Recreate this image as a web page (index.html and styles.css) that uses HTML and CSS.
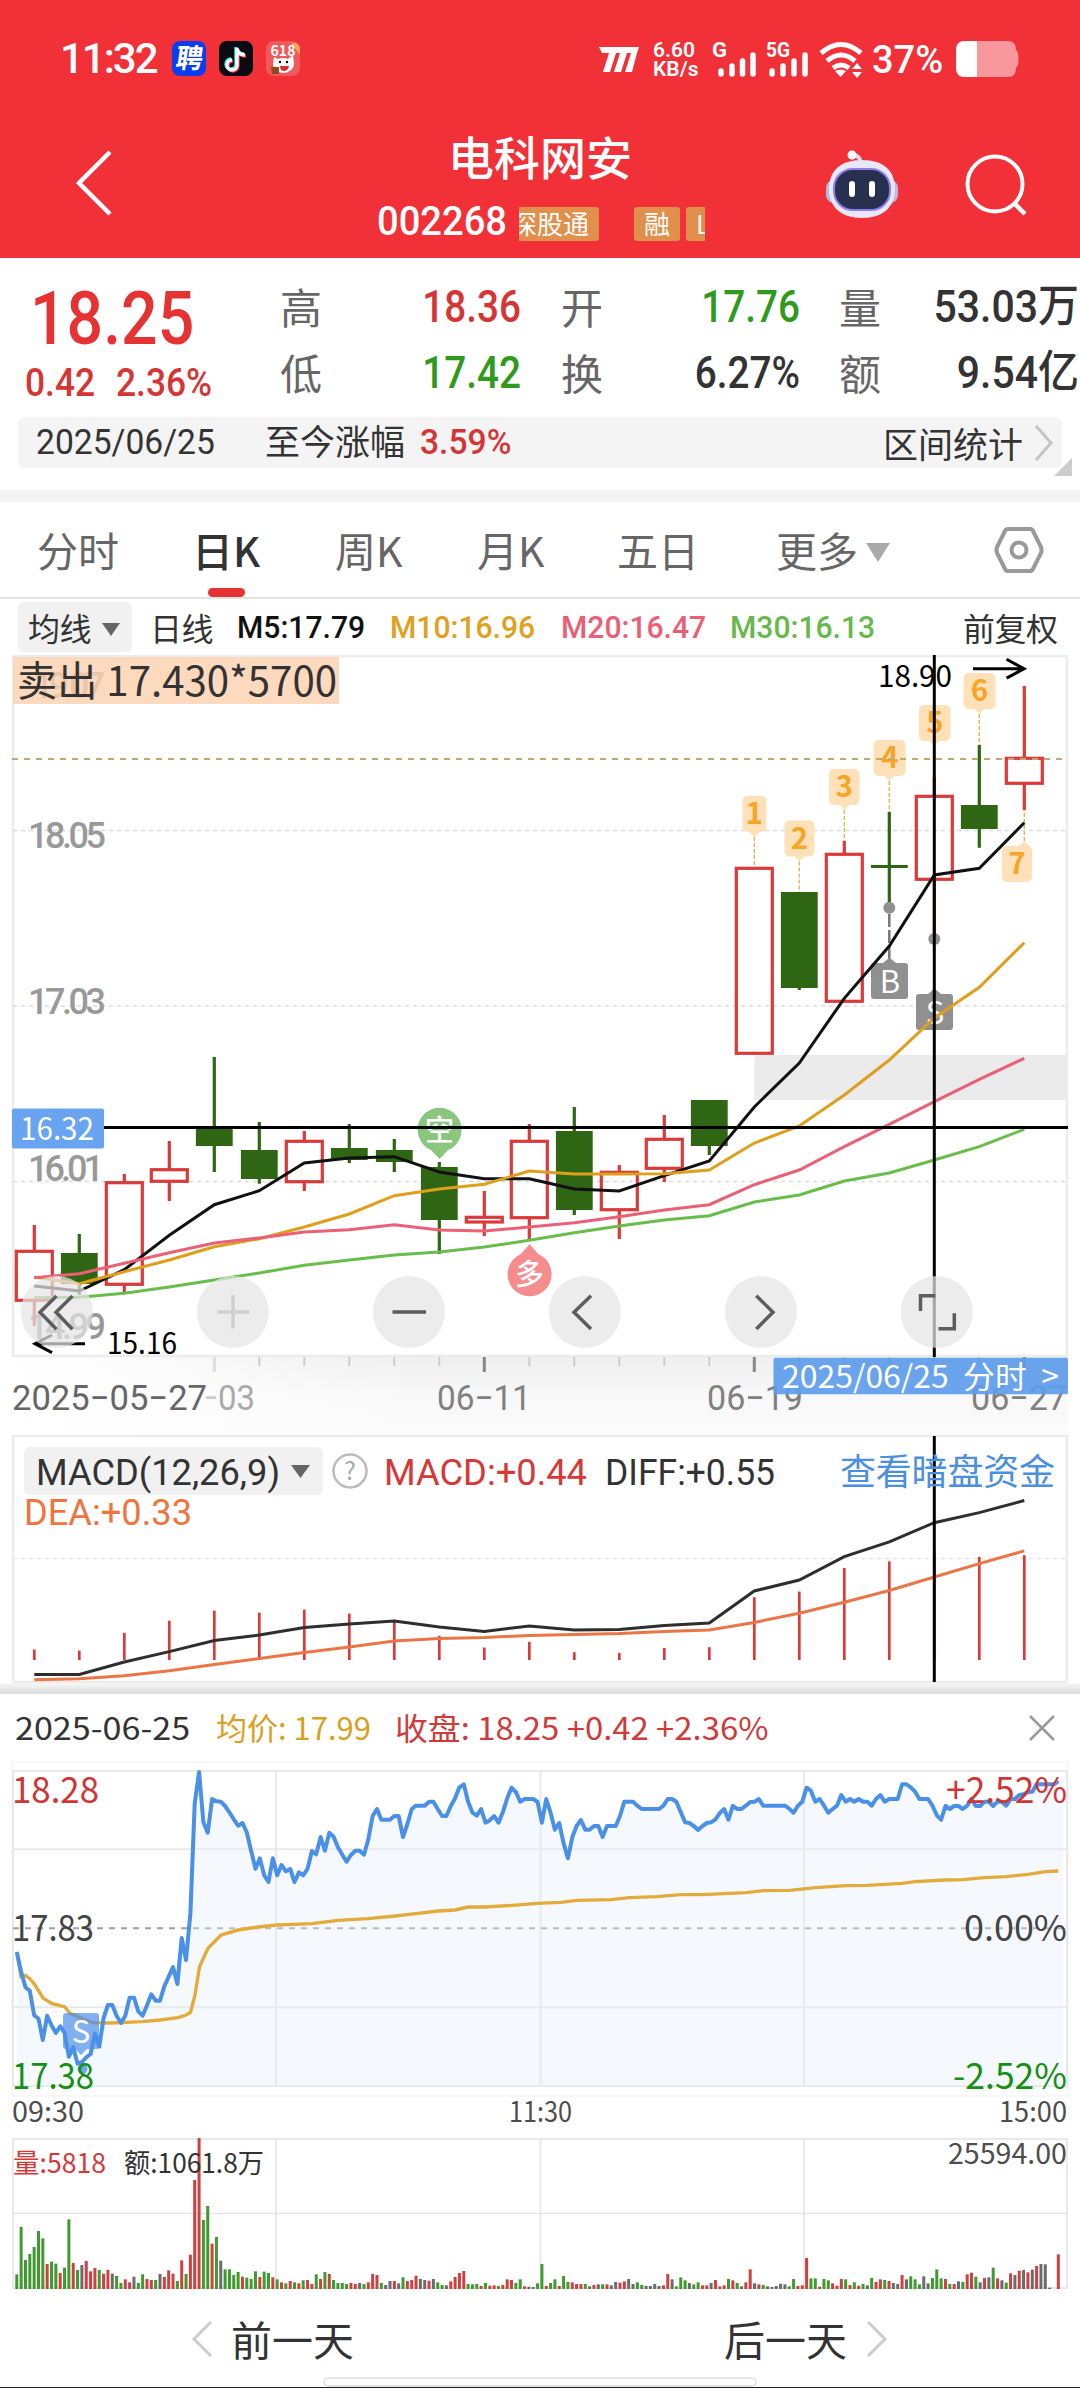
FILE: index.html
```html
<!DOCTYPE html>
<html lang="zh-CN">
<head>
  <meta charset="UTF-8"/>
  <meta name="viewport" content="width=device-width, initial-scale=1"/>
  <title>电科网安 002268</title>
  <link rel="stylesheet" href="styles.css">
</head>
<body>
  <header class="top">
    <div class="status">
      <span class="clock">11:32</span>
      <div class="apps">
        <svg width="34" height="35" viewBox="0 0 34 35"><rect width="34" height="35" rx="8" fill="#0a3cf0"/><text x="17" y="27" text-anchor="middle" font-size="27" font-weight="700" fill="#fff" transform="skewX(-8) translate(3 0)">聘</text></svg>
        <svg width="34" height="35" viewBox="0 0 34 35"><rect width="34" height="35" rx="8" fill="#0b0b14"/><g fill="none" stroke-width="3.4"><path stroke="#25f4ee" d="M17 6v17a5 5 0 1 1-5-5M17 7c1 4 4 6 8 6"/><path stroke="#fe2c55" d="M19 8v17a5 5 0 1 1-5-5M19 9c1 4 4 6 8 6"/><path stroke="#fff" d="M18 7v17a5 5 0 1 1-5-5M18 8c1 4 4 6 8 6"/></g></svg>
        <svg width="34" height="35" viewBox="0 0 34 35"><rect width="34" height="35" rx="8" fill="#f2595a"/><path d="M25 2h5q4 2 4 7v5z" fill="#f9a35b"/><path d="M8 16l4 2q5-2 10 0l5-4 1 9a10.500 9 0 0 1-21 0z" fill="#fff"/><text x="17" y="15" text-anchor="middle" font-size="14" font-weight="700" fill="#fff">618</text><circle cx="14" cy="21" r="1.200"/><circle cx="21" cy="21" r="1.200"/><path d="M14 25h9q-1 5-5 5t-4-5z" fill="#d9302f"/><path d="M5 26h8v7H6z" fill="#8a4a22"/></svg>
      </div>
      <svg class="mi" width="42" height="25" viewBox="0 0 42 25"><path fill="#fff" d="M2 0h40l-2 6-5 19h-7l6-19h-4l-6 19h-7l6-19h-4l-6 19H6L12 6H5z"/></svg>
      <div class="speed"><span>6.60</span><span>KB/s</span></div>
      <svg class="sig" width="42" height="36" viewBox="0 0 42 36"><text x="-1" y="16" font-size="20" font-weight="700" fill="#fff" textLength="15" lengthAdjust="spacingAndGlyphs">G</text><path d="M8 30v3M19 25v8M29.500 20v13M40 14v19" stroke="#fff" stroke-width="5.500" stroke-linecap="round"/></svg>
      <svg class="sig2" width="46" height="36" viewBox="0 0 46 36"><text x="0" y="16" font-size="20" font-weight="700" fill="#fff" textLength="24" lengthAdjust="spacingAndGlyphs">5G</text><path d="M6 30v3M17 25v8M28 20v13M39 14v19" stroke="#fff" stroke-width="5.500" stroke-linecap="round"/></svg>
      <svg class="wifi" width="44" height="37" viewBox="0 0 44 37"><g fill="none" stroke="#fff" stroke-width="5"><path d="M2 12q20-17 40 0"/><path d="M8 20q14-12 28 0"/><path d="M14 27q8-6 16 0"/></g><path d="M16 30q6-3 11 0l-5.500 6zM33 28l5-6 5 6zM33 31l5 6 5-6z" fill="#fff"/></svg>
      <span class="pct">37%</span>
      <svg class="batt" width="63" height="37" viewBox="0 0 63 37"><path d="M9 0h43q8 0 8 9l2 3q1 6 0 12l-2 3q0 9-8 9H9q-9 0-9-9V9q0-9 9-9z" fill="#fff" opacity=".5"/><path d="M21 0H9Q0 0 0 9v18q0 9 9 9h12z" fill="#fff"/></svg>
    </div>
    <div class="nav">
      <svg class="back" width="38" height="68" viewBox="0 0 38 68"><path d="M35 3L4 34l31 31" fill="none" stroke="#fff" stroke-width="4.500"/></svg>
      <div class="title">
        <h1>电科网安</h1>
        <div class="code">
          <span class="num">002268</span>
          <div class="tags"><i class="first">深股通</i><i class="rong">融</i><i>L</i></div>
        </div>
      </div>
      <svg class="robot" width="74" height="70" viewBox="0 0 74 70">
        <path d="M36 14q-1-8-9-8" fill="none" stroke="#dcd9f4" stroke-width="4"/><circle cx="27" cy="6" r="4.500" fill="#fff"/>
        <rect x="1" y="31" width="72" height="23" rx="8" fill="#b9b8e6"/>
        <path d="M37 11c22 0 33 11 33 29S58 69 37 69 4 58 4 40s11-29 33-29z" fill="#e9e8f8"/>
        <rect x="9" y="20" width="56" height="41" rx="19" fill="#27314f" stroke="#8d7df0" stroke-width="2"/>
        <path d="M27 35v10M47 35v10" stroke="#fff" stroke-width="6" stroke-linecap="round"/>
      </svg>
      <svg class="search" width="62" height="64" viewBox="0 0 62 64"><circle cx="30" cy="31" r="27.500" fill="none" stroke="#fff" stroke-width="4"/><path d="M49 50l11 11" stroke="#fff" stroke-width="4.500"/></svg>
    </div>
  </header>

  <section class="quote">
    <div class="last">
      <b class="num">18.25</b>
      <div><span class="num">0.42</span><span class="num">2.36%</span></div>
    </div>
    <dl>
      <dt>高</dt><dd class="up">18.36</dd>
      <dt>开</dt><dd class="down">17.76</dd>
      <dt>量</dt><dd class="wide">53.03万</dd>
      <dt>低</dt><dd class="down">17.42</dd>
      <dt>换</dt><dd>6.27%</dd>
      <dt>额</dt><dd class="wide">9.54亿</dd>
    </dl>
  </section>
  <div class="range">
    <span class="num">2025/06/25</span>
    <span>至今涨幅</span>
    <span class="num up">3.59%</span>
    <span class="stat">区间统计</span>
    <svg width="20" height="36" viewBox="0 0 20 36"><path d="M2 1l15 17L2 35" fill="none" stroke="#c4c4c4" stroke-width="3"/></svg>
    <div class="corner"></div>
  </div>
  <div class="band"></div>

  <nav class="tabs">
    <a>分时</a><a class="on">日K</a><a>周K</a><a>月K</a><a>五日</a><a class="more">更多</a>
    <svg width="50" height="50" viewBox="0 0 50 50"><path d="M14 4h22q2 0 3 2l8 16q1 3 0 6l-8 16q-1 2-3 2H14q-2 0-3-2L3 28q-1-3 0-6l8-16q1-2 3-2z" fill="none" stroke="#999" stroke-width="4"/><circle cx="25" cy="25" r="7.500" fill="none" stroke="#999" stroke-width="4"/></svg>
  </nav>
  <div class="ma">
    <span class="pick">均线</span>
    <span>日线</span>
    <span class="num k">M5:17.79</span>
    <span class="num m10">M10:16.96</span>
    <span class="num m20">M20:16.47</span>
    <span class="num m30">M30:16.13</span>
    <span>前复权</span>
  </div>

  <!-- daily candles -->
  <svg class="chart" width="1080" height="780" viewBox="0 655 1080 780">
    <defs>
      <linearGradient id="axisY" x1="0" y1="0" x2="0" y2="1"><stop offset="0" stop-color="#efefef"/><stop offset=".5" stop-color="#f8f8f8"/><stop offset="1" stop-color="#fbfbfb"/></linearGradient>
      <linearGradient id="axisX"><stop offset="0" stop-color="#fff"/><stop offset=".3" stop-color="#fff" stop-opacity=".8"/><stop offset="1" stop-color="#fff" stop-opacity="0"/></linearGradient>
    </defs>
    <rect x="0" y="1357" width="1068" height="78" fill="url(#axisY)"/>
    <rect x="0" y="1357" width="420" height="78" fill="url(#axisX)"/>
    <path d="M13 656H1067V1356H13Z" fill="none" stroke="#ececec" stroke-width="2.500"/>
    <rect x="754.500" y="1055" width="313" height="45" fill="#ebebeb"/>
    <g stroke="#dcdcdc" stroke-width="1.500" stroke-dasharray="4 4"><path d="M13 830.500H1067M13 1006H1067M13 1181.500H1067"/></g>
    <g class="din" font-size="36" fill="#999">
      <text x="28" y="848" textLength="78">18.05</text>
      <text x="28" y="1014" textLength="78">17.03</text>
      <text x="28" y="1181" textLength="76">16.01</text>
      <text x="28" y="1339" textLength="78">14.99</text>
      <text x="33" y="698" textLength="72">19.07</text>
    </g>
    <g id="badges"></g>
    <g id="candles"></g>
    <path d="M12 759H1067" stroke="#c8a76c" stroke-width="2" stroke-dasharray="6 6"/>
    <g fill="#909090">
      <circle cx="889.300" cy="907.700" r="6"/><circle cx="934.300" cy="939" r="6"/>
      <path d="M889.300 914v46" stroke="#777" stroke-width="2.500" stroke-dasharray="13 3"/>
      <path d="M874 963h9l6.500-5.500 6.500 5.500h9q3 0 3 3v30q0 3-3 3h-31q-3 0-3-3v-30q0-3 3-3z"/>
      <path d="M919 994h9l6.500-5.500 6.500 5.500h9q3 0 3 3v30q0 3-3 3h-31q-3 0-3-3v-30q0-3 3-3z"/>
    </g>
    <g class="cn" font-size="31" fill="#fff" text-anchor="middle"><text x="890" y="993">B</text><text x="935" y="1024">S</text></g>
    <path d="M431 1150l8.600 9 8.600-9a22 22 0 1 0-17.200 0z" fill="#8bc67f"/>
    <text class="cn" x="439.600" y="1141" font-size="29" font-weight="500" fill="#fff" text-anchor="middle">空</text>
    <path d="M521 1254l8.600-10 8.600 10a22 22 0 1 1-17.200 0z" fill="#f68c8c"/>
    <text class="cn" x="529.600" y="1285" font-size="29" font-weight="500" fill="#fff" text-anchor="middle">多</text>
    <g id="maLines"></g>
    <g stroke="#000" stroke-width="3" fill="none">
      <path d="M85 1343.700H35M52 1335L35 1343.700l17 9"/>
      <path d="M973 668.700h51M1006.600 659.300l17.500 9.400-17.500 9.400"/>
      <path d="M104 1127.500H1068M934.300 655V1357"/>
    </g>
    <g class="cn" font-size="30">
      <text x="107" y="1354" textLength="70" lengthAdjust="spacingAndGlyphs">15.16</text>
      <text x="878" y="687" textLength="74" lengthAdjust="spacingAndGlyphs">18.90</text>
    </g>
    <rect x="13" y="657" width="326" height="47" fill="#fdcfae" opacity=".8"/>
    <text class="cn" x="17" y="696" font-size="41" fill="#333" textLength="320" lengthAdjust="spacingAndGlyphs">卖出 17.430*5700</text>
    <rect x="12" y="1108.500" width="92" height="40" rx="2" fill="#68a4ef"/>
    <text class="cn" x="20" y="1140" font-size="31" fill="#fff" textLength="74" lengthAdjust="spacingAndGlyphs">16.32</text>

    <g fill="#e5e5e5" opacity=".72"><circle cx="56.800" cy="1312" r="36"/><circle cx="232.900" cy="1312" r="36"/><circle cx="409" cy="1312" r="36"/><circle cx="584.800" cy="1312" r="36"/><circle cx="761" cy="1312" r="36"/><circle cx="936.700" cy="1312" r="36"/></g>
    <g fill="none" stroke="#5d5d5d" stroke-width="3.500">
      <path d="M56.500 1296L40 1312.300l16.500 17M72.500 1296L56 1312.300l16.500 17"/>
      <path d="M217 1312h32.500M233 1295v33.500" stroke="#cfcfcf"/>
      <path d="M392.500 1312H426"/>
      <path d="M591 1295.700l-17 16.600 17 16.700M756.300 1295.700l16.700 16.600-16.700 16.700"/>
      <path d="M935.300 1295.700h-14.800V1311M938.400 1328.700h15.900v-15.400"/>
    </g>
    <g id="ticks"></g>
    <g class="din axis" font-size="35">
      <text x="12" y="1410" fill="#666" textLength="195" lengthAdjust="spacingAndGlyphs">2025−05−27</text>
      <text x="204" y="1410" fill="#ccc" textLength="14" lengthAdjust="spacingAndGlyphs">−</text><text x="218" y="1410" fill="#aaa" textLength="37" lengthAdjust="spacingAndGlyphs">03</text>
      <text x="437" y="1410" fill="#808080" textLength="94" lengthAdjust="spacingAndGlyphs">06−11</text>
      <text x="707" y="1410" fill="#808080" textLength="96" lengthAdjust="spacingAndGlyphs">06−19</text>
      <text x="971" y="1410" fill="#808080" textLength="96" lengthAdjust="spacingAndGlyphs">06−27</text>
    </g>
    <rect x="773.500" y="1357.700" width="294.500" height="36.500" rx="2" fill="#5c9ceb" opacity=".92"/>
    <text class="cn" x="782" y="1388" font-size="31" fill="#fff" xml:space="preserve" textLength="277" lengthAdjust="spacingAndGlyphs">2025/06/25  分时  &gt;</text>
  </svg>

  <!-- macd -->
  <svg class="chart" width="1080" height="248" viewBox="0 1435 1080 248">
    <path d="M13 1436H1067V1682H13Z" fill="none" stroke="#ececec" stroke-width="2.500"/>
    <path d="M13 1558.600H1067" stroke="#e6e6e6" stroke-width="1.500" stroke-dasharray="4 4"/>
    <rect x="24" y="1447" width="299" height="48" rx="6" fill="#f1f1f1"/>
    <path d="M291 1465h19l-9.500 13z" fill="#666"/>
    <circle cx="350" cy="1471" r="16.500" fill="none" stroke="#bbb" stroke-width="2.500"/>
    <text class="cn" x="350" y="1480" font-size="25" fill="#aaa" text-anchor="middle">?</text>
    <g class="din thin" font-size="36">
      <text x="36" y="1485" fill="#333" textLength="244" lengthAdjust="spacingAndGlyphs">MACD(12,26,9)</text>
      <text x="384" y="1485" fill="#d63838" textLength="203" lengthAdjust="spacingAndGlyphs">MACD:+0.44</text>
      <text x="605" y="1485" fill="#333" textLength="170" lengthAdjust="spacingAndGlyphs">DIFF:+0.55</text>
      <text x="24" y="1525" fill="#ef7440" textLength="168" lengthAdjust="spacingAndGlyphs">DEA:+0.33</text>
    </g>
    <g id="macd"></g>
    <path d="M934.300 1436V1682" stroke="#000" stroke-width="3"/>
    <text class="cn" x="840" y="1485" font-size="36" fill="#4a8fe0" textLength="215">查看暗盘资金</text>
  </svg>
  <div class="shade"></div>

  <section class="day">
    <div class="dayhead">
      <span class="date">2025-06-25</span>
      <span class="avg">均价: 17.99</span>
      <span class="close">收盘: 18.25 +0.42 +2.36%</span>
      <svg width="26" height="26" viewBox="0 0 26 26"><path d="M1 1l24 24M25 1L1 25" stroke="#999" stroke-width="2.500"/></svg>
    </div>
    <svg class="chart" width="1080" height="538" viewBox="0 1758 1080 538">
      <path d="M12 1762H1068V2096H12Z" fill="none" stroke="#f5f5f5" stroke-width="1.500"/>
      <g fill="none" stroke="#e9e9e9" stroke-width="2">
        <path d="M13 1771H1067V2086H13Z"/>
        <path d="M13 2139H1067V2288H13Z"/>
        <path d="M276 1771V2086M540.500 1771V2086M804 1771V2086M13 1849.300H1067M13 2007.300H1067"/>
        <path d="M276 2139V2288M540.500 2139V2288M804 2139V2288"/>
      </g>
      <path d="M13 2213.300H1067" stroke="#dcdcdc" stroke-width="1"/>
      <path d="M13 1928.300H1067" stroke="#a0a0a0" stroke-width="2" stroke-dasharray="6 6"/>
      <g id="minute"></g>
      <path d="M66 2013h30q3 0 3 3v30q0 3-3 3h-9l-6 6-6-6h-9q-3 0-3-3v-30q0-3 3-3z" fill="#4a8fe8" opacity=".7"/>
      <circle cx="82.500" cy="2069" r="5" fill="#6ba6f0"/>
      <text class="cn" x="81" y="2043" font-size="31" fill="#fff" text-anchor="middle">S</text>
      <g class="cn" font-size="36">
        <text x="12" y="1803" fill="#cf3535" textLength="87" lengthAdjust="spacingAndGlyphs">18.28</text>
        <text x="946" y="1803" fill="#cf3535" textLength="121" lengthAdjust="spacingAndGlyphs">+2.52%</text>
        <text x="12" y="1941" fill="#444" textLength="82" lengthAdjust="spacingAndGlyphs">17.83</text>
        <text x="964" y="1941" fill="#444" textLength="103" lengthAdjust="spacingAndGlyphs">0.00%</text>
        <text x="12" y="2089" fill="#159015" textLength="82" lengthAdjust="spacingAndGlyphs">17.38</text>
        <text x="953" y="2089" fill="#159015" textLength="114" lengthAdjust="spacingAndGlyphs">-2.52%</text>
      </g>
      <g class="cn" font-size="28" fill="#4d4d4d">
        <text x="12" y="2122" textLength="72" lengthAdjust="spacingAndGlyphs">09:30</text>
        <text x="509" y="2122" textLength="63" lengthAdjust="spacingAndGlyphs">11:30</text>
        <text x="999" y="2122" textLength="68" lengthAdjust="spacingAndGlyphs">15:00</text>
        <text x="948" y="2164" textLength="119" lengthAdjust="spacingAndGlyphs">25594.00</text>
      </g>
      <g id="volume"></g>
      <g class="cn" font-size="27">
        <text x="13" y="2173" fill="#d23a3a" textLength="93" lengthAdjust="spacingAndGlyphs">量:5818</text>
        <text x="124" y="2173" fill="#333" textLength="140" lengthAdjust="spacingAndGlyphs">额:1061.8万</text>
      </g>
    </svg>
    <div class="pager">
      <svg width="22" height="38" viewBox="0 0 22 38"><path d="M20 2L3 19l17 17" fill="none" stroke="#ccc" stroke-width="3"/></svg>
      <span>前一天</span>
      <span class="next">后一天</span>
      <svg width="22" height="38" viewBox="0 0 22 38"><path d="M2 2l17 17L2 36" fill="none" stroke="#ccc" stroke-width="3"/></svg>
    </div>
    <div class="home"></div>
  </section>
  <script src="script.js"></script>
</body>
</html>
```
FILE: styles.css
```css
* { box-sizing: border-box; }
body { margin: 0; width: 1080px; height: 2388px; overflow: hidden; background: #fff; color: #333; font-family: "Noto Sans CJK SC", sans-serif; display: flex; flex-direction: column; }
svg { display: block; flex: none; }
span, b, i, a, dt, dd { white-space: nowrap; }
h1, dl, dd { margin: 0; }
.num, .din { font-family: Roboto, "Noto Sans CJK SC", sans-serif; font-weight: 500; }
.thin { font-weight: 400; stroke-width: 0; }
.axis { font-weight: 400; }
.cn { font-family: "Noto Sans CJK SC", sans-serif; }
.num { display: inline-block; transform-origin: left; }
.up { color: #d63535; }
.down { color: #2f9a1e; }

/* header */
.top { height: 258px; background: #f13038; color: #fff; flex: none; }
.status { height: 118px; padding: 41px 0 0 60px; display: flex; align-items: flex-start; font-family: Roboto, sans-serif; }
.clock { font-size: 42px; line-height: 36px; font-weight: 500; width: 112px; letter-spacing: -2px; }
.apps { display: flex; gap: 13px; width: 425px; font-family: "Noto Sans CJK SC", sans-serif; }
.mi { margin-top: 6px; }
.speed { width: 58px; margin-left: 14px; display: flex; flex-direction: column; font-size: 21px; line-height: 19px; font-weight: 600; }
.sig { margin-left: 2px; overflow: visible; }
.sig2 { margin-left: 11px; }
.wifi { margin-left: 7px; }
.pct { font-size: 38px; line-height: 38px; font-weight: 500; width: 93px; padding-left: 9px; }
.nav { height: 140px; display: grid; grid-template-columns: 377px 448px 140px 115px; }
.back { margin: 31px 0 0 75px; }
.title { padding-top: 6px; }
.title h1 { width: 326px; text-align: center; font-size: 46px; line-height: 62px; font-weight: 500; }
.code { display: flex; align-items: center; height: 66px; margin-top: 2px; }
.code .num { width: 142px; font-size: 41px; transform: scaleX(.93); }
.tags { display: flex; align-items: center; width: 186px; overflow: hidden; margin-top: 5px; }
.tags i { background: #e08f4c; border-radius: 3px; font-style: normal; font-size: 26px; line-height: 31px; height: 34px; padding: 0 10px; margin-right: 6px; flex: none; }
.tags .first { margin: 0 35px 0 -18px; }
.robot { margin-top: 31px; }
.search { margin-top: 35px; }

/* quote */
.quote { height: 159px; flex: none; display: grid; grid-template-columns: 280px 800px; }
.last { color: #e53232; }
.last b { display: block; font-size: 74px; line-height: 74px; margin: 24px 0 0 30px; height: 74px; transform: scaleX(.87); }
.last div { display: grid; grid-template-columns: 91px 160px; padding: 4px 0 0 25px; font-size: 38px; line-height: 46px; color: #d63535; }
.last span { transform: scaleX(.93); }
dl { display: grid; grid-template-columns: 80px 161px 40px 80px 159px 39px 80px 160px; grid-template-rows: 66px 66px; padding-top: 16px; }
dl dt, dl dd { line-height: 66px; }
dt { font-size: 42px; line-height: 62px; color: #666; }
dl dt { line-height: 63px; }
dd { font-family: Roboto, "Noto Sans CJK SC", sans-serif; font-weight: 500; font-size: 45px; text-align: right; transform: scaleX(.86); transform-origin: right; }
dl .wide { transform: scaleX(.91); }
dt:nth-of-type(3n+2) { grid-column: 4; }
dt:nth-of-type(3n) { grid-column: 7; }
.range { position: relative; margin: 0 18px; height: 51px; flex: none; background: #f4f4f4; border-radius: 6px; display: grid; grid-template-columns: 229px 155px 463px 151px 20px; padding-left: 18px; line-height: 46px; font-size: 35px; align-items: center; }
.range span { margin-top: -5px; }
.range .num { transform: scaleX(.96); font-weight: 400; margin-top: 0; }
.range .up { font-weight: 500; }
.range .stat { margin-top: 0; }
.corner { position: absolute; right: -10px; bottom: -8px; border-left: 18px solid transparent; border-bottom: 18px solid #ccc; }
.band { height: 12px; margin-top: 22px; background: #f4f4f4; flex: none; }

/* tabs */
.tabs { height: 97px; flex: none; display: grid; grid-template-columns: 155px 143px 142px 140px 159px 218px 50px; padding-left: 37px; font-size: 41px; line-height: 94px; color: #666; border-bottom: 2px solid #e3e3e3; }
.tabs svg { margin-top: 23px; }
.tabs .on { color: #333; font-weight: 500; position: relative; }
.on::after { content: ""; position: absolute; left: 16px; bottom: 0; width: 37px; height: 9px; border-radius: 5px; background: #e53232; }
.more::after { content: ""; display: inline-block; border: 12px solid transparent; border-top: 19px solid #aaa; border-bottom: 0; margin-left: 8px; vertical-align: 5px; }
.ma { height: 56px; padding: 3px 0 0 18px; flex: none; display: grid; grid-template-columns: 132px 87px 153px 171px 169px 233px 100px; font-size: 32px; line-height: 50px; letter-spacing: -.5px; }
.pick { width: 114px; height: 50px; padding-left: 10px; background: #f1f1f1; border-radius: 6px; }
.pick::after { content: ""; display: inline-block; border: 9px solid transparent; border-top: 13px solid #666; border-bottom: 0; margin-left: 11px; vertical-align: 5px; }
.ma .num { letter-spacing: 0; transform: scaleX(.94); }
.k { color: #111; }
.m10 { color: #e0a020; }
.m20 { color: #ea5f76; }
.m30 { color: #66b94a; }

/* minute panel */
.shade { height: 11px; flex: none; background: linear-gradient(#f8f8f8, #dadada); }
.day { flex: none; height: 694px; display: flex; flex-direction: column; background: #fff; border-bottom: 1px solid #222; }
.dayhead { height: 64px; flex: none; display: grid; grid-template-columns: 201px 179px 634px 26px; padding: 8px 0 0 15px; font-size: 31px; line-height: 50px; }
.dayhead span { transform-origin: left; justify-self: start; }
.dayhead svg { margin-top: 13px; }
.date { transform: scaleX(1.1); }
.avg { color: #d9a023; }
.close { color: #cf3b3b; transform: scaleX(1.06); }
.pager { display: grid; grid-template-columns: 40px 493px 142px 22px; padding-left: 191px; height: 79px; font-size: 41px; line-height: 84px; }
.pager svg { margin-top: 24px; }
.home { width: 434px; height: 10px; margin: 2px auto 0; border: 2px solid #e6e6e6; border-radius: 6px; background: #fff; }
```
FILE: script.js
```js
const STEP = 45, X0 = 34.3;
const RED = '#d93a3a', GREEN = '#2f6613';
const $ = id => document.getElementById(id);
const cx = i => X0 + STEP * i;

// high, body top, body bottom, low, rising
const candles = [
  [1225,1251.3,1300.3,1326,1],[1234,1253,1284,1295,0],[1174,1182.7,1284.3,1292.7,1],[1141,1169.7,1181.3,1201,1],
  [1057,1127.7,1146,1172,0],[1122,1150,1179,1183.7,0],[1131,1141.3,1181.7,1191,1],[1124,1148,1160,1163,0],
  [1139,1150,1162,1172,0],[1162,1167,1220,1254,0],[1191,1217.3,1222,1236,1],[1124,1141.3,1217.7,1239.3,1],
  [1107,1131,1210,1215,0],[1165,1172.3,1209.7,1239,1],[1115,1139.3,1168.3,1182,1],[1100,1100,1146,1155,0],
  [868.3,868.3,1053.3,1053.3,1],[892,892,988,990,0],[841,854.3,1001.3,1001.3,1],[812,865,868,908,0],
  [777,796.3,879.3,939,1],[745,805,829,847.7,0],[686,758.3,783.3,810,1]
];
let out = '';
candles.forEach(([h, t, b, l, up], i) => {
  const x = cx(i), c = up ? RED : GREEN;
  out += `<path d="M${x} ${h}V${t}M${x} ${b}V${l}" stroke="${c}" stroke-width="3.2"/>`;
  out += up
    ? `<rect x="${x - 18}" y="${t}" width="36" height="${b - t}" fill="none" stroke="${c}" stroke-width="3.2"/>`
    : `<rect x="${x - 18.4}" y="${t}" width="36.8" height="${b - t}" fill="${c}"/>`;
});
$('candles').innerHTML = out;

const ma = {
  '#111': [1286,1291,1269.7,1235.3,1204.7,1190.7,1163,1158,1156.7,1172,1178.7,1178.7,1189,1191,1175.7,1161,1107,1063,998.3,946,875,868.3,822.7],
  '#de9f1c': [1277,1283.7,1271.7,1260,1246.7,1238.7,1227,1214,1195.7,1189,1184.3,1171,1174,1174,1173.7,1170,1143,1126,1095,1060,1018,987.3,942.7],
  '#ea6076': [1277.7,1273.7,1263.3,1252.7,1243,1238,1232,1229.7,1224.7,1230,1231,1227,1222.7,1216.7,1210,1204.7,1184.7,1170,1146.7,1124.3,1101.7,1079.3,1058.3],
  '#69bd4b': [1297.7,1297.3,1293.3,1287,1280,1273,1265.3,1260,1255,1252,1247,1240.3,1232.7,1226,1220,1215.7,1202,1195,1181,1173,1160,1146.7,1129.3]
};
const line = (ys, c, w) => `<polyline points="${ys.map((y, i) => cx(i) + ',' + y).join(' ')}" fill="none" stroke="${c}" stroke-width="${w}"/>`;
$('maLines').innerHTML = Object.keys(ma).map(c => line(ma[c], c, 3)).join('');

// number, left, right, top, anchor x, dotted line end
const badges = [[1,742.5,766.3,796,754.3,868],[2,784.5,814.5,820.5,799.3,892],[3,829,859.5,769,844.3,841],[4,873.7,905.7,740,889.3,812],
  [5,919,950.5,705,934.3,777],[6,963.6,995.6,673,979.3,745],[7,1002,1032,846,1024.3,810]];
$('badges').innerHTML = badges.map(([n, l, r, t, x, e]) => {
  const tip = n === 7 ? t - 5 : t + 41, base = n === 7 ? t + 1 : t + 35;
  return `<rect x="${l}" y="${t}" width="${r - l}" height="36" rx="5" fill="#fee1b8"/>
    <path d="M${x - 6} ${base}h12L${x} ${tip}z" fill="#fee1b8"/>
    <path d="M${x} ${tip}V${e}" stroke="#e3b04c" stroke-width="1.3" stroke-dasharray="4 2"/>
    <text class="cn" x="${(l + r) / 2}" y="${t + 28}" font-size="29" font-weight="700" fill="#f7a427" text-anchor="middle">${n}</text>`;
}).join('');

let ticks = '';
for (let i = 4; i < 23; i++) {
  const big = [4, 10, 16, 22].includes(i);
  ticks += `<path d="M${cx(i)} 1357v${big ? 15 : 9}" stroke="${i === 4 ? '#ddd' : big ? '#888' : '#ccc'}" stroke-width="${big ? 3 : 2}"/>`;
}
$('ticks').innerHTML = ticks;

const hist = [1650.5,1651.5,1633.8,1621.7,1611.6,1613.6,1610.6,1614.6,1620.7,1636.8,1648.5,1642.8,1653.2,1653.9,1648.9,1648.2,1598.2,1592.5,1569,1562.3,1551.5,1557.9,1556.2];
const diff = [1675.4,1675.4,1663,1652.6,1641.5,1636,1628.4,1625,1622,1628,1632.4,1627,1631,1630.4,1626.4,1624,1592,1581,1557.6,1542.8,1523.7,1513.6,1501.5];
const dea = [1680.7,1679.7,1676.7,1671.7,1665.6,1659.6,1653.6,1647.9,1642,1639.5,1638.5,1636.4,1635.4,1634.4,1632.4,1631,1623.4,1614.3,1603.2,1591.5,1578,1564.6,1551.9];
$('macd').innerHTML = hist.map((y, i) => `<path d="M${cx(i)} ${y - 1}V1660" stroke="${RED}" stroke-width="2.7"/>`).join('')
  + line(diff.map(y => y - 1), '#2e2e2e', 3) + line(dea.map(y => y - 1), '#ea7546', 3);

// one value per minute, 09:30 to 15:00
const price = [606,665,712,722,796,806,870,797,826,849,829,848,920,892,941,936,922,912,850,890,804,765,765,797,819,797,743,743,784,797,766,733,752,752,709,680,651,702,564,630,490,160,66,217,248,147,154,155,168,187,208,227,219,247,302,356,325,376,396,325,376,345,364,357,396,367,376,356,303,313,261,302,248,260,292,314,335,315,302,302,314,268,198,177,209,209,209,198,198,261,222,177,167,167,167,155,155,177,198,198,168,145,112,103,155,188,197,177,218,211,198,218,187,145,113,126,155,147,147,147,155,
  218,147,188,239,219,280,325,262,228,210,239,239,228,228,261,228,228,228,198,155,155,155,167,177,177,177,177,177,167,147,147,155,187,217,219,228,240,228,219,217,208,189,177,209,168,177,177,167,156,155,147,167,167,167,167,167,167,176,188,167,155,113,122,155,147,167,188,177,167,135,155,147,155,147,155,155,167,147,135,155,147,147,147,103,103,112,125,147,147,147,167,196,209,168,177,168,168,177,167,147,168,168,155,155,168,155,155,167,147,147,135,133,126,125,103,103,103,103,103,93];
const mx = i => 16.8 + i * 1041.5 / (price.length - 1);
const pts = price.map((v, i) => `${mx(i).toFixed(1)},${(1750 + v / 3).toFixed(1)}`).join(' ');
const avg = [[17,606],[21,680],[25.5,676],[30,687],[34.5,703],[43,744],[52,761],[64.5,770],[70,790],[82,806],[93,818],[112,819],[142,815],[160,810],[178,803],[186,795],[190.5,787],[195,735],[199.5,650],[208,595],[221,555],[238,540],[258,531],[277,525],[312,521],[338,511],[368,506],[395,498],[416,491],[438,483],[455,480],[468,471],[485,471],[512,466],[538,460],[561,457],[577,451],[611,449],[629.5,443],[657,440],[681,434],[702.5,434],[746,428],[763.5,422],[789.5,421],[815.5,413],[846,407],[867.5,406],[902,400],[915,395],[945.5,390],[963,389],[984.5,383],[1006,380],[1028,373],[1045.5,365],[1058.3,363]];
$('minute').innerHTML = `<polygon points="17,2086 ${pts} 1063,1781 1063,2086" fill="#e2eefc" opacity=".36"/>
  <polyline points="${avg.map(([x, v]) => x + ',' + (1750 + v / 3)).join(' ')}" fill="none" stroke="#e2ab3c" stroke-width="3.4"/>
  <polyline points="${pts}" fill="none" stroke="#4a90e6" stroke-width="4" stroke-linejoin="round"/>`;

// colour + distance from the pane top, pane is 507 deep
const vol = `G463 G321 G420 G402 G381 G333 G355 R432 G425 G431 R459 G443 G298 R429 G450 K435 R423 R454 R444 G450 R461 R450 K461 G468 G489 R478 R487 K470 G489 G463 R477 R480 G480 K462 R471 R451 R461 G483 R421 G462 R404 R180 R54 G300 G258 R371 G351 K422 G448 G448 G465 G456 R470 G473 G477 G454 R471 G455 G459 R472 G478 R487 G490 R483 G487 R490 G481 R480 R492 G463 R477 G456 R462 G480 G489 G489 G492 R489 R492 K489 G492 R487 R462 R465 G489 K495 K483 R483 K490 G472 R483 R480 R467 K477 K480 R482 K477 G487 G495 K496 R484 R471 R459 R453 G492 G493 G492 R498 G489 R497 R496 G498 R495 R478 R480 G489 G478 R499 K500 K501 G490
G432 R498 G489 G478 R498 G468 G486 R487 R492 R492 G492 K499 R495 K493 G493 R493 K496 K486 R488 R484 K477 K492 G487 G495 K498 K498 K492 K498 R496 R462 K478 G499 G472 G481 K489 G493 G487 R496 R496 K489 R480 R499 R496 G477 R481 G489 K499 R487 R448 K490 R493 G495 K499 K501 K498 K491 K493 G499 G477 R498 R496 R414 G475 G475 R500 G477 G481 R490 R497 R477 G478 R495 G487 R497 G492 K496 G474 R486 R478 G480 R483 K489 K492 R465 K478 G469 G478 G493 K469 K490 G474 G448 G475 R477 G492 R492 K484 G486 R463 R458 G470 K487 R474 K472 G443 R475 K481 G488 R460 K465 R452 K450 R457 K449 R438 K432 K433 K503 K507 R403`.split(/\s+/);
const tone = { R: '#cf4040', G: '#3f9a2f', K: '#6b6b6b' };
$('volume').innerHTML = vol.map((s, i) => {
  const h = (507 - s.slice(1)) / 3, x = 16.8 + i * 1041.5 / (vol.length - 1);
  return `<rect x="${x - 1.5}" y="${2289 - h}" width="3" height="${h}" fill="${tone[s[0]]}"/>`;
}).join('');
```
